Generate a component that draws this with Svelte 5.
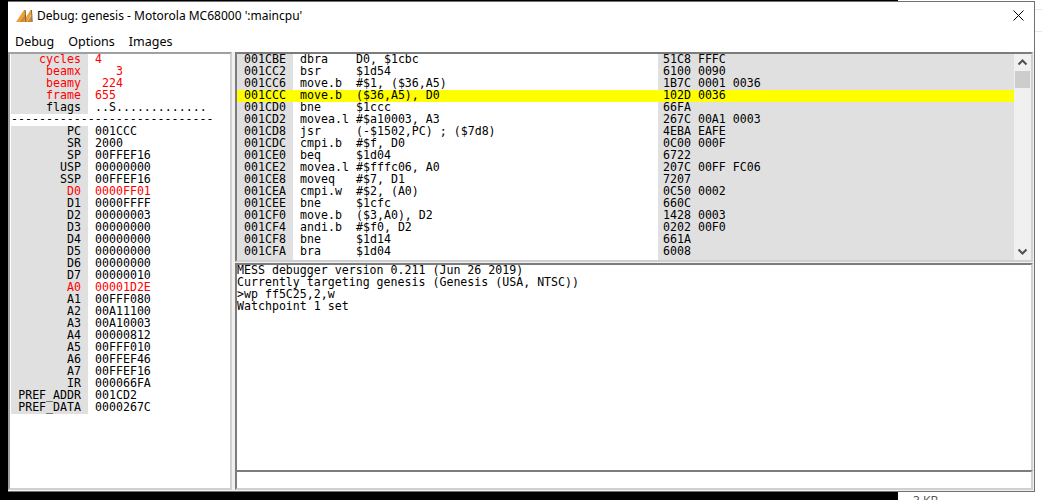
<script>
  const regs = [
    ['cycles', '4', true],
    ['beamx', '   3', true],
    ['beamy', ' 224', true],
    ['frame', '655', true],
    ['flags', '..S.............', false],
    null,
    ['PC', '001CCC', false],
    ['SR', '2000', false],
    ['SP', '00FFEF16', false],
    ['USP', '00000000', false],
    ['SSP', '00FFEF16', false],
    ['D0', '0000FF01', true],
    ['D1', '0000FFFF', false],
    ['D2', '00000003', false],
    ['D3', '00000000', false],
    ['D4', '00000000', false],
    ['D5', '00000000', false],
    ['D6', '00000000', false],
    ['D7', '00000010', false],
    ['A0', '00001D2E', true],
    ['A1', '00FFF080', false],
    ['A2', '00A11100', false],
    ['A3', '00A10003', false],
    ['A4', '00000812', false],
    ['A5', '00FFF010', false],
    ['A6', '00FFEF46', false],
    ['A7', '00FFEF16', false],
    ['IR', '000066FA', false],
    ['PREF_ADDR', '001CD2', false],
    ['PREF_DATA', '0000267C', false]
  ];

  const code = [
    ['001CBE', 'dbra', 'D0, $1cbc', '51C8 FFFC'],
    ['001CC2', 'bsr', '$1d54', '6100 0090'],
    ['001CC6', 'move.b', '#$1, ($36,A5)', '1B7C 0001 0036'],
    ['001CCC', 'move.b', '($36,A5), D0', '102D 0036'],
    ['001CD0', 'bne', '$1ccc', '66FA'],
    ['001CD2', 'movea.l', '#$a10003, A3', '267C 00A1 0003'],
    ['001CD8', 'jsr', '(-$1502,PC) ; ($7d8)', '4EBA EAFE'],
    ['001CDC', 'cmpi.b', '#$f, D0', '0C00 000F'],
    ['001CE0', 'beq', '$1d04', '6722'],
    ['001CE2', 'movea.l', '#$fffc06, A0', '207C 00FF FC06'],
    ['001CE8', 'moveq', '#$7, D1', '7207'],
    ['001CEA', 'cmpi.w', '#$2, (A0)', '0C50 0002'],
    ['001CEE', 'bne', '$1cfc', '660C'],
    ['001CF0', 'move.b', '($3,A0), D2', '1428 0003'],
    ['001CF4', 'andi.b', '#$f0, D2', '0202 00F0'],
    ['001CF8', 'bne', '$1d14', '661A'],
    ['001CFA', 'bra', '$1d04', '6008']
  ];

  const consoleLines = [
    'MESS debugger version 0.211 (Jun 26 2019)',
    'Currently targeting genesis (Genesis (USA, NTSC))',
    '>wp ff5C25,2,w',
    'Watchpoint 1 set'
  ];
</script>

<div class="screen">
  <div class="top-strip"></div>
  <div class="middle">
    <div class="desk-left"></div>
    <div class="window">
      <div class="titlebar">
        <svg class="logo" width="17" height="14" viewBox="0 0 17 14">
          <path d="M0 13 L8 1 L9 1 L9 5 L4 13 Z" fill="#f0a030" />
          <path d="M3.5 13 L9 5 L9.5 13 Z" fill="#c98a38" />
          <path d="M7 13 L14.5 1 L15.5 1 L15.5 5 L11 13 Z" fill="#f0a030" />
          <path d="M11 13 L15.5 6 L16 13 Z" fill="#c98a38" />
          <path d="M9.2 1 L9.8 13 M15.5 1 L16.2 13" stroke="#7a6040" stroke-width="1" fill="none" />
        </svg>
        <span class="title">Debug: genesis - Motorola MC68000 ':maincpu'</span>
        <svg class="close" width="11" height="11" viewBox="0 0 11 11">
          <path d="M0.5 0.5 L10.5 10.5 M10.5 0.5 L0.5 10.5" stroke="#000" stroke-width="1" fill="none" />
        </svg>
      </div>
      <div class="menubar">
        <span>Debug</span>
        <span>Options</span>
        <span>Images</span>
      </div>
      <div class="panes">
        <div class="regs sunken">
          {#each regs as r}
            {#if r}
              <div class="reg" class:changed={r[2]}>
                <span class="reg-name">{r[0]}</span>
                <span class="reg-val">{r[1]}</span>
              </div>
            {:else}
              <div class="reg-sep">-----------------------------</div>
            {/if}
          {/each}
        </div>
        <div class="right">
          <div class="code sunken">
            <div class="code-rows">
              {#each code as c}
                <div class="code-row" class:current={c[0] === '001CCC'}>
                  <span class="addr">{c[0]}</span>
                  <span class="dis"><span class="op">{c[1]}</span>{c[2]}</span>
                  <span class="bytes">{c[3]}</span>
                </div>
              {/each}
              <div class="code-row tail">
                <span class="addr"></span>
                <span class="dis"></span>
                <span class="bytes"></span>
              </div>
            </div>
            <div class="scrollbar">
              <svg width="17" height="17" viewBox="0 0 17 17">
                <path d="M4.5 10.5 L8.5 6.5 L12.5 10.5" stroke="#505050" stroke-width="2" fill="none" />
              </svg>
              <div class="thumb"></div>
              <div class="track"></div>
              <svg width="17" height="17" viewBox="0 0 17 17">
                <path d="M4.5 6.5 L8.5 10.5 L12.5 6.5" stroke="#505050" stroke-width="2" fill="none" />
              </svg>
            </div>
          </div>
          <div class="console sunken">
            {#each consoleLines as line}
              <div class="line">{line}</div>
            {/each}
          </div>
          <div class="input sunken"></div>
        </div>
      </div>
    </div>
    <div class="desk-right">
      <div class="faint first"></div>
      <div class="faint"></div>
    </div>
  </div>
  <div class="bottom-strip">
    <div class="black"></div>
    <div class="size">3 KB</div>
  </div>
</div>

<style>
  :global(body) {
    background: #fff;
  }

  .screen {
    width: 1042px;
    height: 500px;
    overflow: hidden;
    display: flex;
    flex-direction: column;
    background: #fff;
    font-family: "Noto Sans", sans-serif;
  }

  .top-strip {
    width: 898px;
    height: 1px;
    background: #000;
    flex: none;
  }

  .middle {
    display: flex;
    height: 491px;
    flex: none;
  }

  .desk-left {
    width: 8px;
    background: #000;
    flex: none;
  }

  .desk-right {
    flex: 1;
    padding-top: 8px;
  }

  .faint {
    height: 1px;
    background: #e8e8e8;
  }

  .faint.first {
    margin-bottom: 21px;
  }

  .window {
    width: 1027px;
    flex: none;
    box-sizing: border-box;
    border: 1px solid #707070;
    border-left: 0;
    display: flex;
    flex-direction: column;
    background: #fff;
  }

  .titlebar {
    height: 29px;
    box-sizing: border-box;
    padding: 0 10px 2px 8px;
    display: flex;
    align-items: center;
    flex: none;
  }

  .logo {
    margin-right: 4px;
  }

  .title {
    font-size: 12px;
    color: #000;
    flex: 1;
  }

  .menubar {
    height: 21px;
    display: flex;
    gap: 14px;
    padding: 0 0 0 7px;
    align-items: center;
    font-size: 12.5px;
    color: #000;
    flex: none;
    background: #fff;
  }

  .panes {
    flex: 1;
    min-height: 0;
    display: flex;
    gap: 3px;
    background: #f0f0f0;
    padding: 0 1px 0 0;
    border-bottom: 1px solid #f0f0f0;
    font-family: "DejaVu Sans Mono", monospace;
    font-size: 11.6px;
    line-height: 10px;
    color: #000;
  }

  .sunken {
    box-sizing: border-box;
    border-style: solid;
    border-width: 2px;
    border-color: #7c7c7c #d0d0d0 #d0d0d0 #7c7c7c;
  }

  .regs {
    width: 224px;
    flex: none;
    background: #fff;
    padding-left: 1px;
    border-top-color: #a0a0a0;
    border-left-color: #a0a0a0;
  }

  .reg {
    display: flex;
    height: 12px;
    white-space: pre;
    background: linear-gradient(to right, #e0e0e0 77px, transparent 77px);
  }

  .reg-name {
    position: relative;
    width: 77px;
    box-sizing: border-box;
    padding-right: 7px;
    text-align: right;
    flex: none;
  }

  .reg-val {
    padding-left: 7px;
  }

  .reg.changed {
    color: #f00;
  }

  .reg-sep {
    height: 12px;
    white-space: pre;
  }

  .right {
    flex: 1;
    min-width: 0;
    display: flex;
    flex-direction: column;
  }

  .code {
    height: 210px;
    flex: none;
    display: flex;
    background: #fff;
    margin-bottom: 1px;
  }

  .code-rows {
    width: 777px;
    flex: none;
  }

  .code-row {
    display: flex;
    height: 12px;
    white-space: pre;
  }

  .code-row.tail {
    height: 2px;
  }

  .code-row.current {
    background: #ff0;
  }

  .addr {
    width: 56px;
    padding-left: 7px;
    box-sizing: border-box;
    background: #e0e0e0;
    flex: none;
  }

  .dis {
    width: 365px;
    padding-left: 7px;
    box-sizing: border-box;
    flex: none;
  }

  .op {
    display: inline-block;
    width: 56px;
  }

  .bytes {
    flex: 1;
    padding-left: 5px;
    background: #e0e0e0;
  }

  .current .addr,
  .current .bytes {
    background: #ff0;
  }

  .scrollbar {
    flex: 1;
    background: #f0f0f0;
    display: flex;
    flex-direction: column;
    align-items: center;
  }

  .scrollbar svg {
    flex: none;
    display: block;
  }

  .thumb {
    width: 15px;
    height: 17px;
    background: #cdcdcd;
    flex: none;
  }

  .track {
    flex: 1;
  }

  .console {
    flex: 1;
    min-height: 0;
    background: #fff;
    white-space: pre;
    border-bottom: 0;
  }

  .line {
    height: 12px;
  }

  .input {
    height: 20px;
    flex: none;
    background: #fff;
  }

  .bottom-strip {
    flex: 1;
    display: flex;
    min-height: 0;
  }

  .black {
    width: 898px;
    background: #000;
    flex: none;
  }

  .size {
    margin: 2px 0 0 15px;
    font-size: 12px;
    line-height: 14px;
    color: #555;
  }
</style>
